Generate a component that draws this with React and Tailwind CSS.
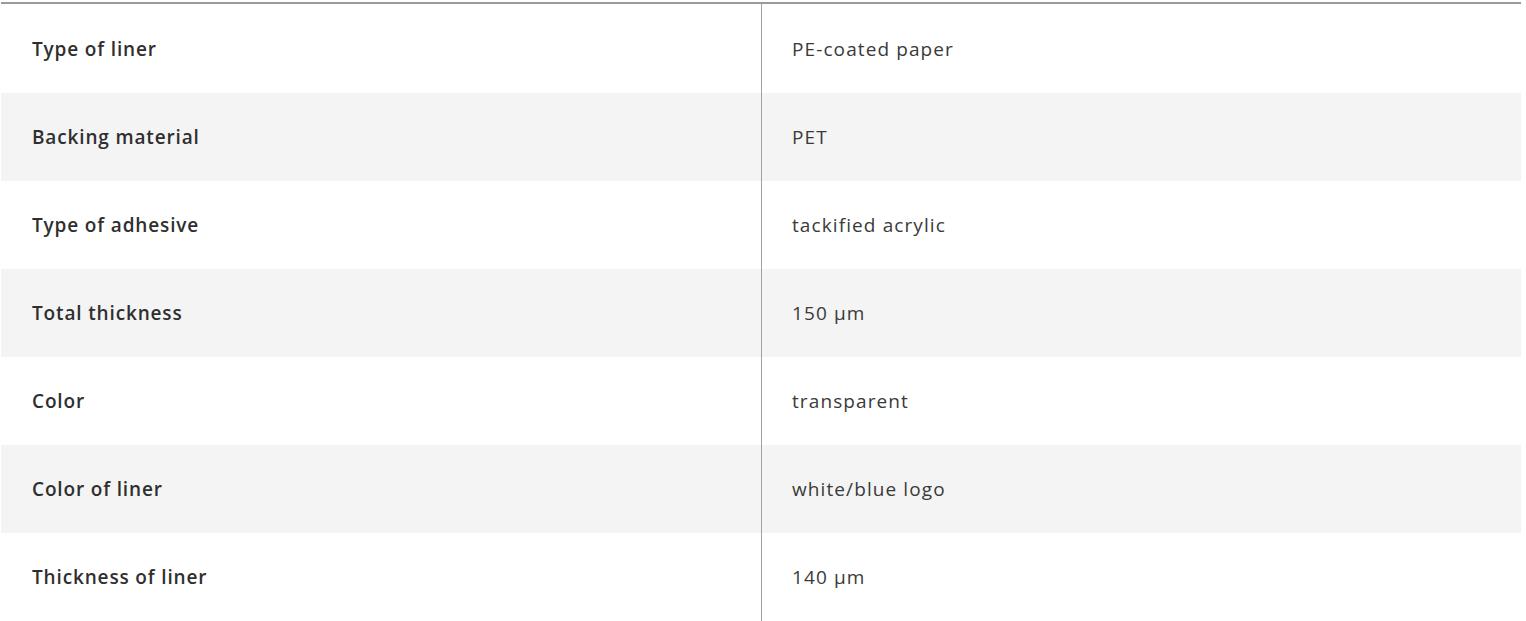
import React from "react";

const rows = [
  ["Type of liner", "PE-coated paper"],
  ["Backing material", "PET"],
  ["Type of adhesive", "tackified acrylic"],
  ["Total thickness", "150 µm"],
  ["Color", "transparent"],
  ["Color of liner", "white/blue logo"],
  ["Thickness of liner", "140 µm"],
];

export default function App() {
  return (
    <div className="w-[1526px] h-[621px] bg-white pt-[2px] pl-[1px] font-['Open_Sans',sans-serif] text-[#333]">
      <div className="w-[1520px] border-t-2 border-[#9a9a9a]">
        {rows.map(([label, value], i) => (
          <div
            key={label}
            className={`grid grid-cols-2 ${i === 0 ? "h-[89px]" : "h-[88px]"} ${i % 2 === 1 ? "bg-[#f4f4f4]" : "bg-white"}`}
          >
            <div className="flex items-center pl-[31px] pt-[1px] text-[19px] tracking-[0.85px] font-semibold text-[#2f2f2f]">
              {label}
            </div>
            <div className="flex items-center pl-[30px] pt-[1px] text-[19px] tracking-[1.1px] border-l border-[#a0a0a0] text-[#3a3a3a]">
              {value}
            </div>
          </div>
        ))}
      </div>
    </div>
  );
}
